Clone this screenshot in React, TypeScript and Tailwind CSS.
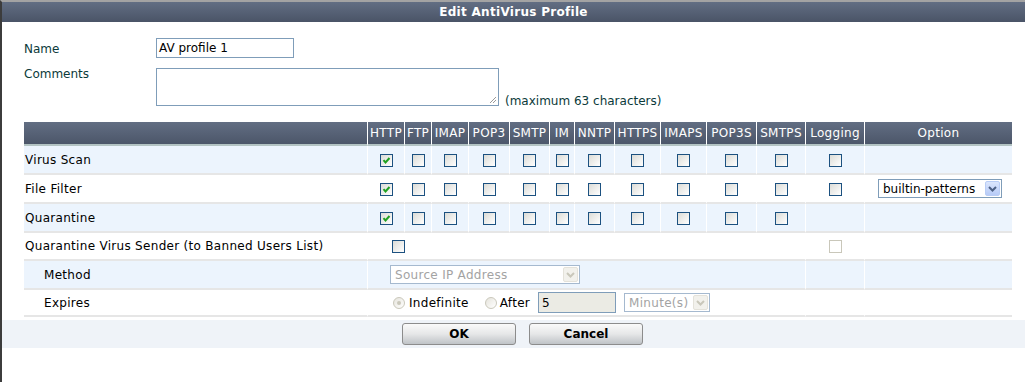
import React from 'react';

const protocols = [
  { name: 'HTTP', w: 'w-[37px]' },
  { name: 'FTP', w: 'w-[27px]' },
  { name: 'IMAP', w: 'w-[37px]' },
  { name: 'POP3', w: 'w-[41px]' },
  { name: 'SMTP', w: 'w-[40px]' },
  { name: 'IM', w: 'w-[25px]' },
  { name: 'NNTP', w: 'w-[40px]' },
  { name: 'HTTPS', w: 'w-[46px]' },
  { name: 'IMAPS', w: 'w-[46px]' },
  { name: 'POP3S', w: 'w-[50px]' },
  { name: 'SMTPS', w: 'w-[49px]' },
];

function Checkbox({ checked = false, disabled = false }: { checked?: boolean; disabled?: boolean }) {
  if (disabled) {
    return <span className="inline-block w-[13px] h-[13px] border border-[#c9c7ba] bg-white align-middle" />;
  }
  return (
    <span className="inline-flex items-center justify-center w-[13px] h-[13px] border border-[#1c5180] bg-gradient-to-br from-[#dcdcd7] to-white align-middle">
      {checked && (
        <svg width="9" height="9" viewBox="0 0 9 9">
          <path d="M1.5 4.2 L3.5 6.5 L7.5 2" fill="none" stroke="#21a121" strokeWidth="2" />
        </svg>
      )}
    </span>
  );
}

function Radio({ checked = false }: { checked?: boolean }) {
  return (
    <span className="inline-flex items-center justify-center w-[12px] h-[12px] rounded-full border border-[#cac8bb] bg-gradient-to-br from-[#e6e4dc] to-white align-middle">
      {checked && <span className="w-[4px] h-[4px] rounded-full bg-[#cac8bb]" />}
    </span>
  );
}

function Chevron({ color }: { color: string }) {
  return (
    <svg width="9" height="6" viewBox="0 0 9 6">
      <path d="M1 1 L4.5 4.5 L8 1" fill="none" stroke={color} strokeWidth="2" />
    </svg>
  );
}

function Select({ value, width, disabled = false }: { value: string; width: string; disabled?: boolean }) {
  return (
    <div
      className={`flex items-center justify-between h-[19px] border bg-white ${width} ${
        disabled ? 'border-[#a5b9cf] text-[#a3a3a3]' : 'border-[#7f9db9] text-black'
      }`}
    >
      <span className="pl-[4px] leading-none whitespace-nowrap">{value}</span>
      <span
        className={`flex items-center justify-center w-[15px] h-[15px] mr-[1px] rounded-[2px] border ${
          disabled ? 'bg-[#f2f1ec] border-[#e4e2da]' : 'bg-gradient-to-b from-[#dbe6fd] to-[#b7cbf7] border-[#b9cdf6]'
        }`}
      >
        <Chevron color={disabled ? '#c9c7ba' : '#4d6185'} />
      </span>
    </div>
  );
}

const cell = 'border-r border-white border-b-2 border-b-[#e6e6e6]';

export default function App() {
  const rows = [
    { label: 'Virus Scan', logging: true, option: false },
    { label: 'File Filter', logging: true, option: true },
    { label: 'Quarantine', logging: false, option: false },
  ];

  return (
    <div className="w-[1025px] h-[382px] bg-white border-l-2 border-l-[#3c3c3c] border-t-2 border-t-[#a3a3a3] font-['DejaVu_Sans',Verdana,sans-serif] text-[12px] text-black overflow-hidden">
      <div className="h-[20px] flex items-center justify-center bg-gradient-to-b from-[#626e83] to-[#4a5467] text-white font-bold text-[12px] tracking-[0.3px]">
        Edit AntiVirus Profile
      </div>

      <div className="pl-[22px] pt-[16px]">
        <div className="flex items-center h-[20px]">
          <span className="w-[132px] text-[#0b3a3a] mt-[1px]">Name</span>
          <div className="w-[138px] h-[20px] border border-[#7f9db9] pl-[2px] flex items-center">AV profile 1</div>
        </div>
        <div className="flex items-start mt-[10px]">
          <span className="w-[132px] text-[#0b3a3a] -mt-[3px]">Comments</span>
          <div className="relative w-[343px] h-[38px] border border-[#7f9db9]">
            <svg className="absolute right-[1px] bottom-[1px]" width="8" height="8" viewBox="0 0 8 8">
              <path d="M7 1 L1 7 M7 4 L4 7" stroke="#9a9a9a" strokeWidth="1" />
            </svg>
          </div>
          <span className="self-end ml-[6px] -mb-[4px] text-[#0b3a3a]">(maximum 63 characters)</span>
        </div>

        <table className="mt-[16px] w-[988px] table-fixed border-separate border-spacing-0 tracking-[0.3px]">
          <colgroup>
            <col className="w-[344px]" />
            {protocols.map((p) => (
              <col key={p.name} className={p.w} />
            ))}
            <col className="w-[59px]" />
            <col className="w-[147px]" />
          </colgroup>
          <thead>
            <tr className="bg-gradient-to-b from-[#626e83] to-[#4a5467] text-white">
              <th className="h-[24px] border-r border-white border-b-2 border-b-[#b3c3c3]" />
              {protocols.map((p) => (
                <th key={p.name} className="font-normal border-r border-white border-b-2 border-b-[#b3c3c3] whitespace-nowrap">
                  {p.name}
                </th>
              ))}
              <th className="font-normal border-r border-white border-b-2 border-b-[#b3c3c3]">Logging</th>
              <th className="font-normal border-b-2 border-b-[#b3c3c3]">Option</th>
            </tr>
          </thead>
          <tbody>
            {rows.map((r, i) => (
              <tr key={r.label} className={i % 2 === 0 ? 'bg-[#ecf4fd]' : 'bg-white'}>
                <td className={`h-[29px] pl-[1px] ${cell}`}>{r.label}</td>
                {protocols.map((p, j) => (
                  <td key={p.name} className={`text-center ${cell}`}>
                    <Checkbox checked={j === 0} />
                  </td>
                ))}
                <td className={`text-center ${cell}`}>{r.logging && <Checkbox />}</td>
                <td className="border-b-2 border-b-[#e6e6e6]">
                  {r.option && (
                    <div className="flex justify-center pl-[3px] tracking-normal">
                      <Select value="builtin-patterns" width="w-[124px]" />
                    </div>
                  )}
                </td>
              </tr>
            ))}
            <tr className="bg-white">
              <td className={`h-[28px] pl-[1px] ${cell}`}>Quarantine Virus Sender (to Banned Users List)</td>
              <td colSpan={11} className={`pl-[24px] ${cell}`}>
                <Checkbox />
              </td>
              <td className={`text-center ${cell}`}>
                <Checkbox disabled />
              </td>
              <td className="border-b-2 border-b-[#e6e6e6]" />
            </tr>
            <tr className="bg-[#ecf4fd]">
              <td className={`h-[29px] pl-[20px] ${cell}`}>Method</td>
              <td colSpan={11} className={`pl-[22px] ${cell}`}>
                <Select value="Source IP Address" width="w-[190px]" disabled />
              </td>
              <td className={cell} />
              <td className="border-b-2 border-b-[#e6e6e6]" />
            </tr>
            <tr className="bg-white">
              <td className={`h-[27px] pl-[20px] ${cell}`}>Expires</td>
              <td colSpan={11} className={`pl-[25px] ${cell}`}>
                <div className="flex items-center">
                  <Radio checked />
                  <span className="ml-[4px]">Indefinite</span>
                  <span className="ml-[16px]">
                    <Radio />
                  </span>
                  <span className="ml-[3px]">After</span>
                  <div className="ml-[8px] w-[78px] h-[21px] border border-[#7f9db9] bg-[#ebebe4] pl-[3px] flex items-center">5</div>
                  <div className="ml-[8px]">
                    <Select value="Minute(s)" width="w-[86px]" disabled />
                  </div>
                </div>
              </td>
              <td className={cell} />
              <td className="border-b-2 border-b-[#e6e6e6]" />
            </tr>
          </tbody>
        </table>
      </div>

      <div className="mt-[3px] h-[28px] bg-[#eff3f8] flex items-center justify-center gap-[13px] pl-[18px]">
        <button className="w-[114px] h-[22px] rounded-[3px] border border-[#8c8c8c] bg-gradient-to-b from-[#fafafa] via-[#e6e7e8] to-[#bfc3c7] font-bold text-[12px] text-black">
          OK
        </button>
        <button className="w-[114px] h-[22px] rounded-[3px] border border-[#8c8c8c] bg-gradient-to-b from-[#fafafa] via-[#e6e7e8] to-[#bfc3c7] font-bold text-[12px] text-black">
          Cancel
        </button>
      </div>
    </div>
  );
}
